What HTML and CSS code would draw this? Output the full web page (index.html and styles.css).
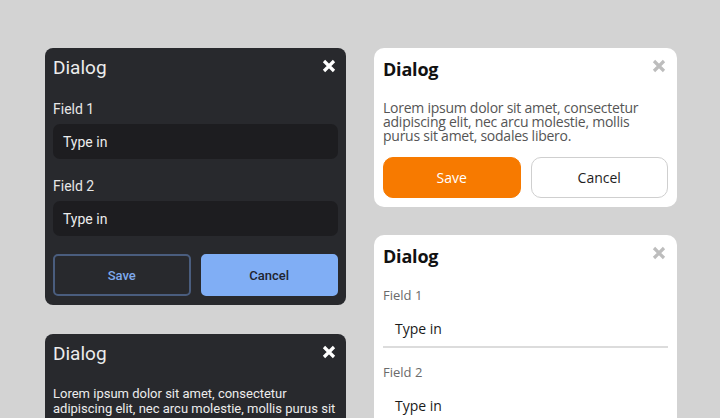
FILE: index.html
```html
<html>
<head>
	<meta charset="utf-8">
	<link rel="stylesheet" href="styles.css">
</head>

<body>
	<div class="board">
		<div class="column column-dark">
			<section class="dialog dark">
				<header class="dialog-head">
					<h2>Dialog</h2>
					<button class="close" aria-label="Close">
						<svg viewBox="0 0 14 14" width="14" height="14"><path d="M2 2 L12 12 M12 2 L2 12" /></svg>
					</button>
				</header>
				<div class="field">
					<label>Field 1</label>
					<div class="input">Type in</div>
				</div>
				<div class="field">
					<label>Field 2</label>
					<div class="input">Type in</div>
				</div>
				<div class="actions">
					<button class="btn btn-outline">Save</button>
					<button class="btn btn-fill">Cancel</button>
				</div>
			</section>

			<section class="dialog dark">
				<header class="dialog-head">
					<h2>Dialog</h2>
					<button class="close" aria-label="Close">
						<svg viewBox="0 0 14 14" width="14" height="14"><path d="M2 2 L12 12 M12 2 L2 12" /></svg>
					</button>
				</header>
				<p class="body-text">Lorem ipsum dolor sit amet, consectetur adipiscing elit, nec arcu molestie, mollis purus sit amet, sodales libero.</p>
				<div class="actions">
					<button class="btn btn-outline">Save</button>
					<button class="btn btn-fill">Cancel</button>
				</div>
			</section>
		</div>

		<div class="column column-light">
			<section class="dialog light">
				<header class="dialog-head">
					<h2>Dialog</h2>
					<button class="close" aria-label="Close">
						<svg viewBox="0 0 14 14" width="14" height="14"><path d="M2 2 L12 12 M12 2 L2 12" /></svg>
					</button>
				</header>
				<p class="body-text">Lorem ipsum dolor sit amet, consectetur adipiscing elit, nec arcu molestie, mollis purus sit amet, sodales libero.</p>
				<div class="actions">
					<button class="btn btn-fill">Save</button>
					<button class="btn btn-outline">Cancel</button>
				</div>
			</section>

			<section class="dialog light">
				<header class="dialog-head">
					<h2>Dialog</h2>
					<button class="close" aria-label="Close">
						<svg viewBox="0 0 14 14" width="14" height="14"><path d="M2 2 L12 12 M12 2 L2 12" /></svg>
					</button>
				</header>
				<div class="field">
					<label>Field 1</label>
					<div class="input">Type in</div>
				</div>
				<div class="field">
					<label>Field 2</label>
					<div class="input">Type in</div>
				</div>
				<div class="actions">
					<button class="btn btn-fill">Save</button>
					<button class="btn btn-outline">Cancel</button>
				</div>
			</section>
		</div>
	</div>
</body>

</html>
```

FILE: styles.css
```css
body {
	margin: 0;
	padding: 0;
	background: #d3d3d3;
	overflow: hidden;
}

.board {
	display: flex;
	align-items: flex-start;
	gap: 28px;
	padding: 48px 0 0 45px;
}

.column {
	display: flex;
	flex-direction: column;
}

.column-dark {
	width: 301px;
	gap: 29px;
}

.column-light {
	width: 303px;
	gap: 28px;
}

.dialog {
	box-sizing: border-box;
}

h2 {
	margin: 0;
}

p {
	margin: 0;
}

button {
	font-family: inherit;
	cursor: pointer;
}

.dialog-head {
	display: flex;
	justify-content: space-between;
	align-items: flex-start;
}

.close {
	background: none;
	border: none;
	padding: 0;
	display: block;
}

.close svg {
	display: block;
	fill: none;
	stroke-width: 3.2;
}

.field label {
	display: block;
}

.input {
	display: flex;
	align-items: center;
	box-sizing: border-box;
}

.actions {
	display: flex;
	gap: 10px;
}

.btn {
	flex: 1 1 0;
	min-width: 0;
	box-sizing: border-box;
}

/* Dark variant */

.dark {
	background: #28292d;
	color: #e6e6e6;
	font-family: Roboto, "Liberation Sans", sans-serif;
	border-radius: 8px;
	padding: 8px 8px 9px;
}

.dark h2 {
	font-size: 19px;
	line-height: 24px;
	font-weight: 400;
	color: #ececec;
}

.dark .close {
	margin: 3px 2px 0 0;
}

.dark .close svg {
	stroke: #ffffff;
}

.dark .field label {
	font-size: 14px;
	line-height: 16px;
	margin-top: 21px;
}

.dark .field + .field label {
	margin-top: 19px;
}

.dark .input {
	height: 35px;
	margin-top: 7px;
	padding-left: 10px;
	background: #1d1d20;
	border-radius: 7px;
	font-size: 14px;
	line-height: 16px;
	color: #ececec;
}

.dark .body-text {
	margin-top: 20px;
	font-size: 13px;
	line-height: 15px;
	color: #ececec;
}

.dark .actions {
	margin-top: 18px;
}

.dark .btn {
	height: 42px;
	border-radius: 5px;
	font-size: 13px;
	font-weight: 500;
}

.dark .btn-outline {
	background: transparent;
	border: 2px solid #4a5d7e;
	color: #7fa9ec;
}

.dark .btn-fill {
	background: #80aef5;
	border: 2px solid #80aef5;
	color: #1f2430;
}

/* Light variant */

.light {
	background: #ffffff;
	color: #222222;
	font-family: "Open Sans", "DejaVu Sans", sans-serif;
	border-radius: 10px;
	padding: 9px;
}

.light h2 {
	font-size: 18px;
	line-height: 24px;
	font-weight: 700;
	letter-spacing: -0.2px;
	color: #111111;
}

.light .close {
	margin: 2px 2px 0 0;
}

.light .close svg {
	stroke: #bdbdbd;
}

.light .body-text {
	margin-top: 20px;
	font-size: 14px;
	line-height: 14px;
	letter-spacing: -0.25px;
	color: #555555;
}

.light .field label {
	font-size: 13px;
	line-height: 16px;
	margin-top: 19px;
	color: #6a6a6a;
}

.light .field + .field label {
	margin-top: 16px;
}

.light .input {
	height: 36px;
	margin-top: 9px;
	padding-left: 12px;
	border-bottom: 2px solid #dcdcdc;
	font-size: 14px;
	line-height: 16px;
	color: #1a1a1a;
}

.light .actions {
	margin-top: 14px;
}

.light .field + .actions {
	margin-top: 18px;
}

.light .btn {
	height: 41px;
	border-radius: 10px;
	font-size: 14px;
	font-weight: 400;
}

.light .btn-fill {
	background: #f77a00;
	border: 1px solid #f77a00;
	color: #ffffff;
}

.light .btn-outline {
	background: #ffffff;
	border: 1px solid #cfcfcf;
	color: #1e1e1e;
}
```
